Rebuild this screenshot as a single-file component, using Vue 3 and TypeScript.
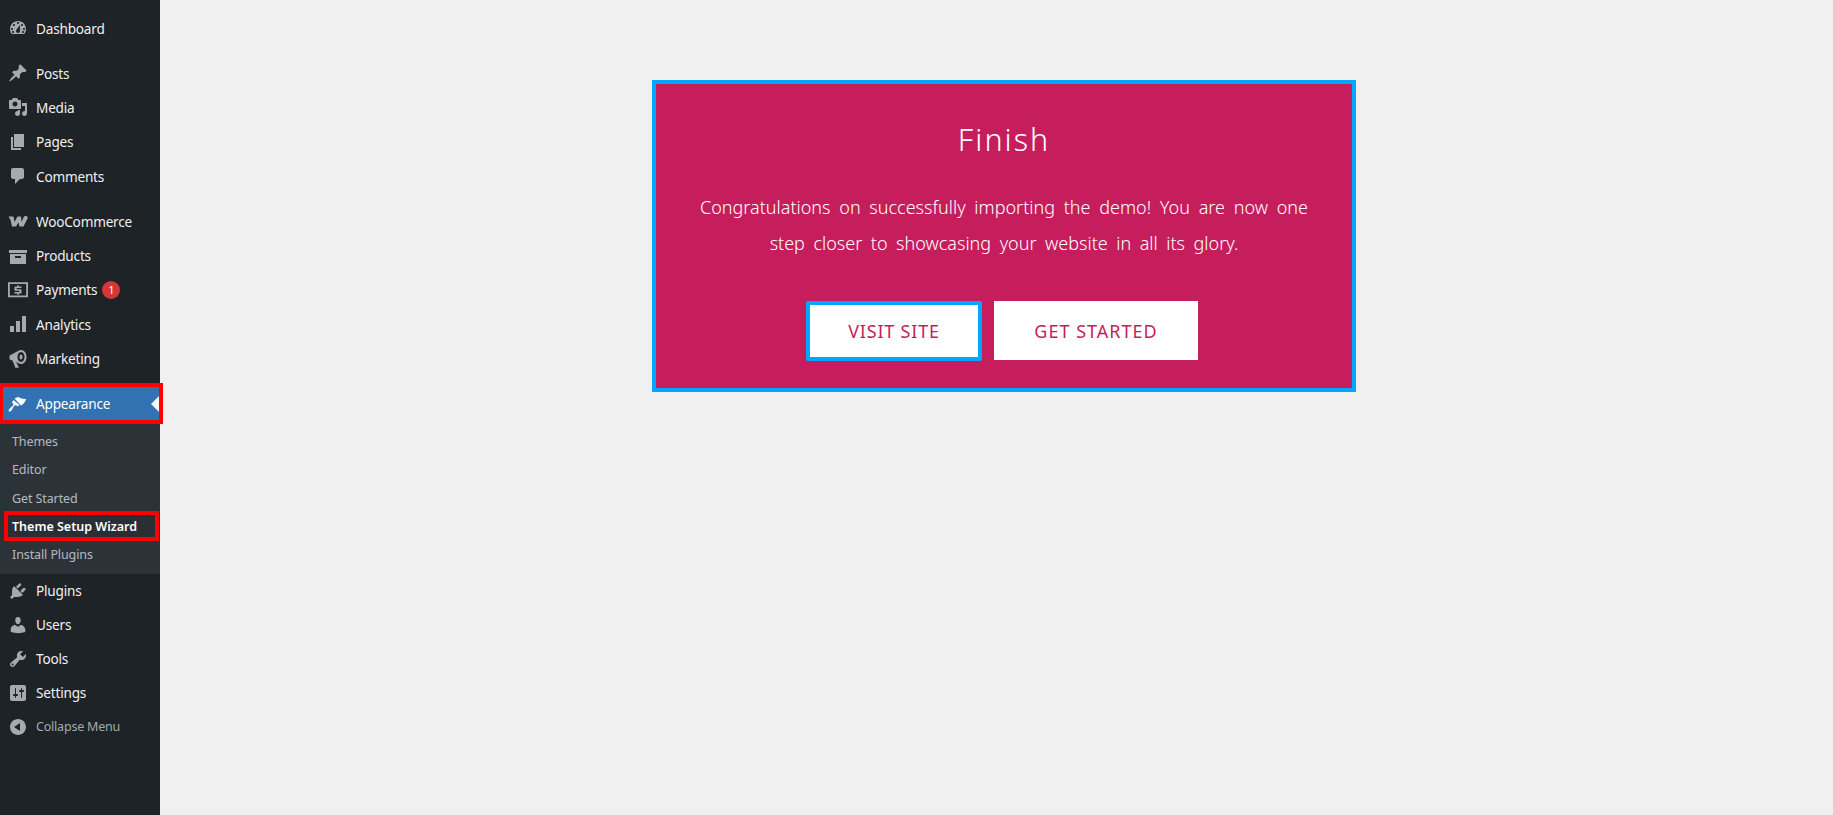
<script setup lang="ts">
interface MenuItem {
  label: string
  icon: string
  gap?: boolean
  badge?: string
}

const topItems: MenuItem[] = [
  { label: 'Dashboard', icon: 'M3.76 16h12.48c1.1-1.37 1.76-3.11 1.76-5 0-4.42-3.58-8-8-8s-8 3.58-8 8c0 1.89.66 3.63 1.76 5zM10 4c.55 0 1 .45 1 1s-.45 1-1 1-1-.45-1-1 .45-1 1-1zM6 6c.55 0 1 .45 1 1s-.45 1-1 1-1-.45-1-1 .45-1 1-1zm8 0c.55 0 1 .45 1 1s-.45 1-1 1-1-.45-1-1 .45-1 1-1zm-5.37 5.55L12 7v6c0 1.1-.9 2-2 2s-2-.9-2-2c0-.57.24-1.08.63-1.45zM4 10c.55 0 1 .45 1 1s-.45 1-1 1-1-.45-1-1 .45-1 1-1zm12 0c.55 0 1 .45 1 1s-.45 1-1 1-1-.45-1-1 .45-1 1-1zm-11 3c.55 0 1 .45 1 1s-.45 1-1 1-1-.45-1-1 .45-1 1-1zm10 0c.55 0 1 .45 1 1s-.45 1-1 1-1-.45-1-1 .45-1 1-1z' },
  { label: 'Posts', gap: true, icon: 'M10.44 3.02l1.82-1.82 6.36 6.35-1.83 1.82c-1.05-.68-2.48-.57-3.41.36l-.75.75c-.92.93-1.04 2.35-.35 3.41l-1.83 1.82-2.41-2.41-2.8 2.79c-.42.42-3.38 2.71-3.8 2.29s1.86-3.39 2.28-3.81l2.79-2.79L4.1 9.36l1.83-1.82c1.05.69 2.48.57 3.4-.36l.75-.75c.93-.92 1.05-2.35.36-3.41z' },
  { label: 'Media', icon: 'M13 11V4c0-.55-.45-1-1-1h-1.67L9 1H5L3.67 3H2c-.55 0-1 .45-1 1v7c0 .55.45 1 1 1h10c.55 0 1-.45 1-1zM7 4.5c1.38 0 2.5 1.12 2.5 2.5S8.38 9.5 7 9.5 4.5 8.38 4.5 7 5.62 4.5 7 4.5zM14 6h5v10.5c0 1.38-1.12 2.5-2.5 2.5S14 17.88 14 16.5s1.12-2.5 2.5-2.5c.17 0 .34.02.5.05V9h-3V6zm-4 8.05V13h2v3.5c0 1.38-1.12 2.5-2.5 2.5S7 17.88 7 16.5 8.12 14 9.5 14c.17 0 .34.02.5.05z' },
  { label: 'Pages', icon: 'M6 15V2h10v13H6zm-1 1h8v2H3V5h2v11z' },
  { label: 'Comments', icon: 'M5 2h9c1.1 0 2 .9 2 2v7c0 1.1-.9 2-2 2h-2l-5 5v-5H5c-1.1 0-2-.9-2-2V4c0-1.1.9-2 2-2z' },
  { label: 'WooCommerce', gap: true, icon: 'M.5 5.500H5.500L6.500 11L9.500 5.500H13L13.500 11L15.500 6.500C16.500 4.500 19.500 4.500 19.800 7L15.500 15.500H11.500L10.500 11.500L8 15.500H4L2.500 9Z' },
  { label: 'Products', icon: 'M19 4v3H1V4h18zM2 8h16v10H2V8zm5 2v2h6v-2H7z' },
  { label: 'Payments', badge: '1', icon: 'M0 2.300H20V17.300H0ZM1.800 4V15.600H18.200V4ZM9.200 5.300h1.600v1.200h2.700v1.500H8.600v1.200h3.900c.6 0 1 .4 1 1v2.300c0 .6-.4 1-1 1h-1.700v1.200H9.200v-1.200H6.500v-1.500h4.900v-1.200H7.500c-.6 0-1-.4-1-1V7.500c0-.6.4-1 1-1h1.700z' },
  { label: 'Analytics', icon: 'M18 18V2h-4v16h4zm-6 0V7H8v11h4zm-6 0v-6H2v6h4z' },
  { label: 'Marketing', icon: 'M1.500 7.500C1.500 6.500 2 6 3 5.800L10 2C11 1.200 12 1 13 1C16.300 1 18.500 4.200 18.500 8C18.500 11.800 16.300 15 13 15C12 15 11 14.700 10 14L8 13L11 18.500L7.500 19L4.500 11.500L3 11C2 10.800 1.500 10.300 1.500 9.500ZM13 3C10.800 3 9.500 5.300 9.500 8S10.800 13 13 13S16.500 10.700 16.500 8S15.200 3 13 3ZM13 5.500c-1 0-1.500 1.100-1.500 2.500s.5 2.500 1.500 2.500 1.500-1.100 1.500-2.500-.5-2.500-1.500-2.500z' },
]

const subItems = ['Themes', 'Editor', 'Get Started', 'Theme Setup Wizard', 'Install Plugins']

const bottomItems: MenuItem[] = [
  { label: 'Plugins', icon: 'M13.11 4.360L9.870 7.600 8 5.730l3.240-3.240c.35-.34 1.050-.2 1.560.32.52.51.66 1.210.31 1.550zm-8 1.770l.91-1.120 9.010 9.010-1.190.84c-.71.71-2.630 1.160-3.820 1.160H6.140L4.900 17.260c-.59.59-1.540.59-2.120 0-.59-.58-.59-1.530 0-2.120l1.240-1.240v-3.880c0-1.130.4-3.190 1.090-3.890zm7.260 3.970l3.240-3.240c.34-.35 1.040-.21 1.550.31.52.51.66 1.210.31 1.550l-3.240 3.250z' },
  { label: 'Users', icon: 'M10 9.250c-2.270 0-2.730-3.440-2.730-3.440C7 4.020 7.820 2 9.970 2c2.160 0 2.980 2.020 2.710 3.810 0 0-.41 3.440-2.680 3.440zm0 2.570L12.720 10c2.390 0 4.520 2.330 4.520 4.530v2.490s-3.650 1.130-7.240 1.130c-3.650 0-7.240-1.130-7.240-1.130v-2.490c0-2.250 1.940-4.480 4.470-4.480z' },
  { label: 'Tools', icon: 'M16.680 9.770c-1.340 1.340-3.300 1.670-4.950.99l-5.410 6.520c-.99.99-2.590.99-3.580 0s-.99-2.590 0-3.570l6.520-5.420c-.68-1.650-.35-3.610.99-4.950 1.280-1.280 3.120-1.620 4.720-1.060l-2.890 2.890 2.820 2.820 2.860-2.870c.53 1.580.18 3.390-1.080 4.650zM3.810 16.210c.4.39 1.040.39 1.430 0 .4-.4.4-1.040 0-1.440-.39-.39-1.030-.39-1.430 0-.39.4-.39 1.040 0 1.440z' },
  { label: 'Settings', icon: 'M18 16V4c0-1.100-.9-2-2-2H4c-1.100 0-2 .9-2 2v12c0 1.100.9 2 2 2h12c1.100 0 2-.9 2-2zM8 11h1c.55 0 1 .45 1 1s-.45 1-1 1H8v1.500c0 .28-.22.5-.5.5s-.5-.22-.5-.5V13H6c-.55 0-1-.45-1-1s.45-1 1-1h1V5.500c0-.28.22-.5.5-.5s.5.22.5.5V11zm5-2h-1c-.55 0-1-.45-1-1s.45-1 1-1h1V5.500c0-.28.22-.5.5-.5s.5.22.5.5V7h1c.55 0 1 .45 1 1s-.45 1-1 1h-1v5.500c0 .28-.22.5-.5.5s-.5-.22-.5-.5V9z' },
]

const brushIcon = 'M6.500 4.500L10 3C12 3.500 14 5.300 18 5C17.500 8 15 10.500 13 11.500ZM5.500 6L11.500 11L9.500 12.500L8.500 11.500C7.500 11 6.500 11.300 6 12L3.500 16.500C2.800 17.500 1.500 18 1 17.500C.5 17 .5 15.500 1.500 14.700L5 11.500C5.500 11 5.500 10 5 9.500L4 8.500Z'
const collapseIcon = 'M18 10c0-4.420-3.580-8-8-8s-8 3.580-8 8 3.580 8 8 8 8-3.580 8-8zm-6-4v8l-6-4z'
</script>

<template>
  <div class="page">
    <aside class="sidebar">
      <a v-for="item in topItems" :key="item.label" class="row" :class="{ gap: item.gap }">
        <svg class="icon" viewBox="0 0 20 20"><path :d="item.icon" fill-rule="evenodd" /></svg>
        <span>{{ item.label }}</span>
        <span v-if="item.badge" class="badge">{{ item.badge }}</span>
      </a>

      <a class="row gap current">
        <svg class="icon" viewBox="0 0 20 20"><path :d="brushIcon" /></svg>
        <span>Appearance</span>
      </a>
      <div class="submenu">
        <a
          v-for="sub in subItems"
          :key="sub"
          class="subrow"
          :class="{ wizard: sub === 'Theme Setup Wizard' }"
        >{{ sub }}</a>
      </div>

      <a v-for="item in bottomItems" :key="item.label" class="row tight">
        <svg class="icon" viewBox="0 0 20 20"><path :d="item.icon" fill-rule="evenodd" /></svg>
        <span>{{ item.label }}</span>
      </a>
      <a class="row collapse">
        <svg class="icon" viewBox="0 0 20 20"><path :d="collapseIcon" fill-rule="evenodd" /></svg>
        <span>Collapse Menu</span>
      </a>
    </aside>

    <main class="content">
      <section class="card">
        <h1>Finish</h1>
        <p>Congratulations on successfully importing the demo! You are now one step closer to showcasing your website in all its glory.</p>
        <div class="actions">
          <a class="btn focused">VISIT SITE</a>
          <a class="btn wide">GET STARTED</a>
        </div>
      </section>
    </main>
  </div>
</template>

<style>
html, body {
  margin: 0;
  background: #f0f0f1;
}
</style>

<style scoped>
.page {
  display: flex;
  min-height: 815px;
  font-family: "Noto Sans", "Open Sans", sans-serif;
}

.sidebar {
  width: 160px;
  flex: none;
  box-sizing: border-box;
  padding-top: 11px;
  background: #1d2327;
  display: flex;
  flex-direction: column;
}

.row {
  height: 34.4px;
  display: flex;
  align-items: center;
  font-size: 13.6px;
  letter-spacing: -0.2px;
  color: #f0f0f1;
  padding-left: 8px;
  box-sizing: border-box;
}

.row.gap {
  margin-top: 10.5px;
}

.row.tight {
  height: 34px;
}

.icon {
  width: 20px;
  height: 20px;
  margin-right: 8px;
  fill: #a7aaad;
  flex: none;
}

.badge {
  width: 18px;
  height: 18px;
  margin-left: 5px;
  border-radius: 50%;
  background: #d63638;
  color: #fff;
  font-size: 11px;
  display: flex;
  align-items: center;
  justify-content: center;
}

.current {
  background: #3271b2;
  color: #fff;
  position: relative;
  margin-left: 2px;
  padding-left: 6px;
  outline: 4px solid #f00;
  outline-offset: -1px;
  z-index: 1;
}

.current .icon {
  fill: #fff;
}

.current::after {
  content: "";
  position: absolute;
  right: 1px;
  top: 50%;
  margin-top: -8px;
  border: 8px solid transparent;
  border-left-width: 0;
  border-right-color: #f6f6f7;
}

.submenu {
  background: #2c3338;
  padding: 6.5px 0 5px;
  display: flex;
  flex-direction: column;
}

.subrow {
  height: 28.3px;
  display: flex;
  align-items: center;
  font-size: 12.5px;
  letter-spacing: -0.1px;
  color: rgba(240, 246, 252, 0.7);
  padding-left: 12px;
  box-sizing: border-box;
}

.wizard {
  color: #fff;
  font-weight: 600;
  letter-spacing: 0;
  margin: 0 2px 0 5px;
  padding-left: 7px;
  background: #292f34;
  outline: 4px solid #f00;
  outline-offset: -3px;
}

.collapse {
  color: #a7aaad;
  font-size: 12.5px;
  height: 32px;
  margin-top: 0.8px;
}

.content {
  flex: 1;
  display: flex;
  justify-content: center;
  align-items: flex-start;
  padding: 80px 0 0 15px;
}

.card {
  width: 704px;
  height: 312px;
  box-sizing: border-box;
  border: 4px solid #00a6ff;
  background: #c61d5d;
  color: #fff;
  text-align: center;
  padding: 35px 44px 0;
}

h1 {
  margin: 0;
  font-size: 30.5px;
  line-height: 40px;
  font-weight: 300;
  letter-spacing: 2px;
}

p {
  margin: 30px 0 0;
  font-size: 18px;
  line-height: 36px;
  font-weight: 300;
  word-spacing: 3.85px;
  text-align: justify;
  text-align-last: center;
}

.actions {
  margin-top: 40px;
  padding-right: 4px;
  display: flex;
  justify-content: center;
  gap: 12px;
}

.btn {
  width: 204px;
  height: 59px;
  background: #fff;
  color: #c61d5d;
  font-size: 18px;
  letter-spacing: 0.8px;
  display: flex;
  align-items: center;
  justify-content: center;
  box-sizing: border-box;
}

.wide {
  letter-spacing: 1px;
}

.focused {
  width: 176px;
  border: 4px solid #00a6ff;
  height: 60px;
  border-radius: 2px;
}
</style>
